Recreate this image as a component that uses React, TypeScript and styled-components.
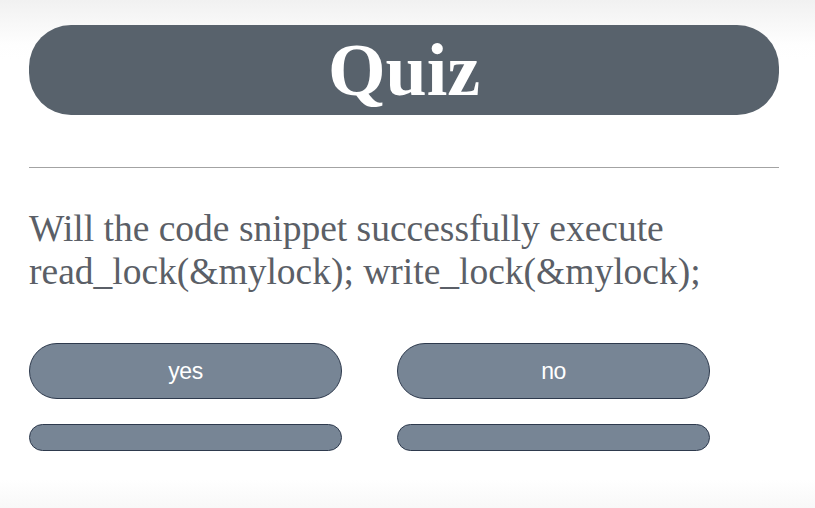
import React from "react";
import styled, { createGlobalStyle } from "styled-components";

const Global = createGlobalStyle`
  html, body { margin: 0; padding: 0; }
  body {
    width: 815px;
    height: 508px;
    overflow: hidden;
    background: linear-gradient(to bottom, #f1f1f1 0px, #fefefe 45px, #ffffff 60px, #ffffff 480px, #f8f8f8 508px);
    font-family: "Liberation Serif", "Times New Roman", serif;
  }
`;

const Page = styled.div`
  width: 750px;
  padding: 25px 0 0 29px;
  display: flex;
  flex-direction: column;
`;

const Header = styled.h1`
  margin: 0;
  height: 90px;
  border-radius: 42px;
  background: #58626c;
  color: #ffffff;
  font-family: "Liberation Serif", "Times New Roman", serif;
  font-weight: bold;
  font-size: 74px;
  display: flex;
  align-items: center;
  justify-content: center;
  line-height: 1;
`;

const Rule = styled.hr`
  margin: 52px 0 0 0;
  border: none;
  border-top: 1px solid #a3a3a3;
  height: 0;
`;

const Question = styled.p`
  margin: 39px 0 0 0;
  font-size: 37.5px;
  line-height: 43px;
  color: #5b5f67;
  font-family: "Liberation Serif", "Times New Roman", serif;
`;

const Grid = styled.div`
  margin-top: 50px;
  display: grid;
  grid-template-columns: 313px 313px;
  column-gap: 55px;
  row-gap: 25px;
`;

const Answer = styled.button<{ $tall?: boolean }>`
  height: ${(p) => (p.$tall ? "56px" : "27px")};
  border-radius: 28px;
  background: #778595;
  border: 1px solid #2e3a4d;
  color: #ffffff;
  font-family: "Liberation Sans", Arial, sans-serif;
  font-size: 23px;
  letter-spacing: -0.5px;
  padding: 0;
  display: flex;
  align-items: center;
  justify-content: center;
`;

export default function App() {
  return (
    <>
      <Global />
      <Page>
        <Header>Quiz</Header>
        <Rule />
        <Question>
          Will the code snippet successfully execute
          <br />
          read_lock(&amp;mylock); write_lock(&amp;mylock);
        </Question>
        <Grid>
          <Answer $tall>yes</Answer>
          <Answer $tall>no</Answer>
          <Answer />
          <Answer />
        </Grid>
      </Page>
    </>
  );
}
